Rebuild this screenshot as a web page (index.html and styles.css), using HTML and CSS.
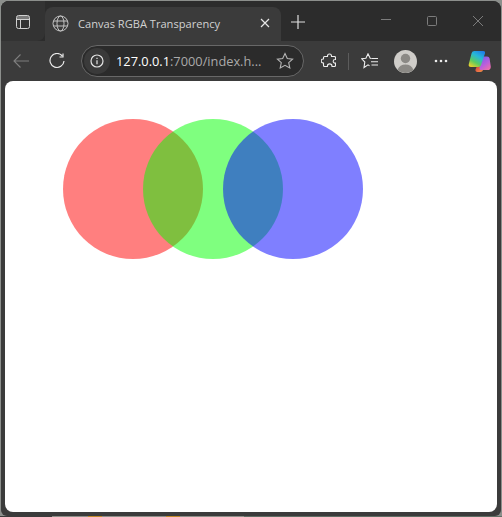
FILE: index.html
```html
<!DOCTYPE html>
<html lang="en">
<head>
    <meta charset="UTF-8">
    <title>Canvas RGBA Transparency</title>
    <link rel="stylesheet" href="styles.css">
</head>
<body>

<div class="window">
    <div class="tab-strip">
        <div class="tab-menu">
            <svg class="icon" width="16" height="16" viewBox="0 0 16 16">
                <path d="M2 2h12v3.500H2z" fill="#d0d0d0" opacity="0.45"/>
                <rect x="1.500" y="1.500" width="13" height="13" rx="2" fill="none" stroke="#d0d0d0"/>
                <path d="M1.500 5.500h13M5.500 5.500v9" fill="none" stroke="#d0d0d0"/>
            </svg>
        </div>
        <div class="tab">
            <svg class="icon" width="17" height="17" viewBox="0 0 17 17" fill="none" stroke="#c4c4c4">
                <circle cx="8.500" cy="8.500" r="7.500"/>
                <ellipse cx="8.500" cy="8.500" rx="3.500" ry="7.500"/>
                <path d="M1.500 6h14M1.500 11h14"/>
            </svg>
            <span class="tab-title">Canvas RGBA Transparency</span>
            <svg class="icon tab-close" width="10" height="10" viewBox="0 0 10 10" stroke="#e6e6e6" stroke-width="1.200">
                <path d="M1 1l8 8M9 1l-8 8"/>
            </svg>
        </div>
        <svg class="icon new-tab" width="16" height="16" viewBox="0 0 16 16" stroke="#e0e0e0" stroke-width="1.200">
            <path d="M8 1v14M1 8h14"/>
        </svg>
        <div class="window-controls">
            <svg class="icon" width="12" height="12" viewBox="0 0 12 12" stroke="#7c7c7c"><path d="M1 4.500h10"/></svg>
            <svg class="icon" width="12" height="12" viewBox="0 0 12 12" fill="none" stroke="#7c7c7c"><rect x="1.500" y="1.500" width="9" height="9" rx="1"/></svg>
            <svg class="icon" width="12" height="12" viewBox="0 0 12 12" stroke="#7c7c7c"><path d="M1 1l10 10M11 1L1 11"/></svg>
        </div>
    </div>

    <div class="toolbar">
        <svg class="icon back" width="16" height="16" viewBox="0 0 16 16" fill="none" stroke="#7e7e7e" stroke-width="1.100">
            <path d="M16 8H1M7.500 1.500L1 8l6.500 6.500"/>
        </svg>
        <svg class="icon reload" width="16" height="16" viewBox="0 0 16 16" fill="none" stroke="#ececec" stroke-width="1.200">
            <path d="M13.400 3A7 7 0 1 0 15 8"/>
            <path d="M14 .5V4h-3.500"/>
        </svg>
        <div class="address">
            <div class="site-info">
                <svg class="icon" width="14" height="14" viewBox="0 0 14 14" fill="none" stroke="#e4e4e4" stroke-width="1.200">
                    <circle cx="7" cy="7" r="6"/>
                    <path d="M7 6.200v4M7 3.800v1.200"/>
                </svg>
            </div>
            <span class="url"><span class="host">127.0.0.1</span>:7000/index.h...</span>
            <svg class="icon" width="18" height="18" viewBox="0 0 18 18" fill="none" stroke="#b5b5b5" stroke-width="1.100">
                <path d="M9 1.500l2.300 5 5.300.6-3.900 3.600 1.100 5.300L9 13.300 4.200 16l1.100-5.300L1.400 7.100l5.300-.6z"/>
            </svg>
        </div>
        <svg class="icon puzzle" width="15" height="16" viewBox="-0.5 0 15 16" fill="none" stroke="#ececec" stroke-width="1.100">
            <path d="M6 3.500V3a2 2 0 0 1 4 0v.500h3a1 1 0 0 1 1 1v2h-.5a1.800 1.800 0 0 0 0 3.600h.5v2.400a1 1 0 0 1-1 1h-2.500v-.3a2.300 2.300 0 0 0-4.600 0v.3H3a1 1 0 0 1-1-1V10h-.3a2 2 0 0 1 0-4H2V4.500a1 1 0 0 1 1-1z"/>
        </svg>
        <div class="divider"></div>
        <svg class="icon fav" width="17" height="16" viewBox="0 0 17 16" fill="none" stroke="#ececec" stroke-width="1.100">
            <path d="M10.500 5.500L9.200 5.200 7 .8 4.900 5.200.7 5.800l3.100 3.200-.8 5.500 4-2.700 1.500.9"/>
            <path d="M10.500 5.500H17M10 8.800h7M10.500 12H17"/>
        </svg>
        <svg class="icon avatar" width="23" height="23" viewBox="0 0 23 23">
            <circle cx="11.500" cy="11.500" r="11.500" fill="#cfcdc9"/>
            <circle cx="11.500" cy="8.500" r="4.700" fill="#8b8985"/>
            <path d="M3.600 19.800c1.200-3.600 4.300-5.300 7.900-5.300s6.700 1.700 7.900 5.300a11.500 11.500 0 0 1-15.800 0z" fill="#8b8985"/>
        </svg>
        <svg class="icon more" width="14" height="4" viewBox="0 0 14 4" fill="#ececec">
            <circle cx="2" cy="2" r="1.300"/><circle cx="7" cy="2" r="1.300"/><circle cx="12" cy="2" r="1.300"/>
        </svg>
        <svg class="icon copilot" width="23" height="23" viewBox="0 0 23 23">
            <defs>
                <linearGradient id="cp-left" x1="0.800" y1="0" x2="0.200" y2="1">
                    <stop offset="0" stop-color="#1f7fe8"/>
                    <stop offset="0.35" stop-color="#27b8d8"/>
                    <stop offset="0.7" stop-color="#5ccb5f"/>
                    <stop offset="1" stop-color="#e8d02e"/>
                </linearGradient>
                <linearGradient id="cp-right" x1="0.200" y1="0" x2="0.800" y2="1">
                    <stop offset="0" stop-color="#7a5fe8"/>
                    <stop offset="0.55" stop-color="#b95fdc"/>
                    <stop offset="1" stop-color="#f06fa8"/>
                </linearGradient>
                <linearGradient id="cp-low" x1="0" y1="0" x2="1" y2="1">
                    <stop offset="0" stop-color="#d8383c"/>
                    <stop offset="1" stop-color="#f59a4a"/>
                </linearGradient>
            </defs>
            <path d="M9 16h7l-1 4c-.4 1.300-1.200 2-2.600 2H9.500c-1.600 0-2.300-1-2-2.500z" fill="url(#cp-low)"/>
            <path d="M12.500 6.500h6.500c1.500 0 2.200.7 2.600 2l1.100 7.500c.4 2.400-.8 4-3 4h-6.200c-1.700 0-2.300-1.200-1.800-3z" fill="url(#cp-right)"/>
            <path d="M6.500 1H15c2 0 2.500 1.200 1.800 3L13 15c-.5 1.300-1.300 2-2.800 2H3c-2 0-2.700-1.200-2.200-3L3.500 3.500C4 1.800 5 1 6.500 1z" fill="url(#cp-left)"/>
        </svg>
    </div>

    <div class="page">
        <svg class="canvas" width="300" height="140" viewBox="0 0 300 140">
            <circle cx="70" cy="70" r="70" fill="rgba(255, 0, 0, 0.5)"/>
            <circle cx="150" cy="70" r="70" fill="rgba(0, 255, 0, 0.5)"/>
            <circle cx="230" cy="70" r="70" fill="rgba(0, 0, 255, 0.5)"/>
        </svg>
    </div>
</div>

<div class="desktop-strip">
    <span class="strip-dark"></span>
    <span class="strip-grey"></span>
    <span class="strip-orange"></span>
    <span class="strip-grey-wide"></span>
    <span class="strip-orange"></span>
    <span class="strip-grey-wide"></span>
    <span class="strip-green"></span>
</div>

</body>
</html>
```

FILE: styles.css
```css
html, body {
    height: 100%;
}
body {
    margin: 0;
    padding: 1px 0 0;
    box-sizing: border-box;
    overflow: hidden;
    background-color: #8c8f8c;
    font-family: 'Open Sans', sans-serif;
}
.icon {
    display: block;
    flex: none;
}
.window {
    height: 515px;
    margin: 0 1px;
    box-sizing: border-box;
    display: flex;
    flex-direction: column;
    background-color: #3b3b3b;
    border-radius: 8px 8px 6px 6px;
    overflow: hidden;
}
.tab-strip {
    height: 40px;
    flex: none;
    display: flex;
    align-items: flex-end;
    background-color: #2c2c2c;
}
.tab-menu {
    width: 44px;
    height: 40px;
    display: flex;
    align-items: center;
    justify-content: center;
    padding: 2px 0 0 0;
    box-sizing: border-box;
    background-color: #333;
    border-radius: 0 0 8px 0;
}
.tab {
    width: 236px;
    height: 34px;
    box-sizing: border-box;
    display: flex;
    align-items: center;
    padding: 0 11px 2px 7px;
    background-color: #3b3b3b;
    border-radius: 8px 8px 0 0;
}
.tab-title {
    flex: 1;
    margin-left: 9px;
    color: #d2d2d2;
    font-size: 11.1px;
    white-space: nowrap;
}
.new-tab {
    margin: 0 0 11px 9px;
}
.window-controls {
    flex: 1;
    display: flex;
    justify-content: space-between;
    padding: 0 17px 0 74px;
    margin-bottom: 14px;
}
.toolbar {
    height: 40px;
    flex: none;
    display: flex;
    align-items: center;
    background-color: #3b3b3b;
}
.back {
    margin-left: 12px;
}
.reload {
    margin-left: 20px;
}
.address {
    width: 223px;
    height: 32px;
    box-sizing: border-box;
    margin-left: 16px;
    padding: 0 9px 0 2px;
    display: flex;
    align-items: center;
    background-color: #2b2b2b;
    border: 1px solid #686868;
    border-radius: 16px;
}
.site-info {
    width: 26px;
    height: 26px;
    display: flex;
    align-items: center;
    justify-content: center;
    background-color: #3a3a3a;
    border-radius: 50%;
}
.url {
    flex: 1;
    margin-left: 6px;
    color: #aaa;
    font-size: 12.8px;
    white-space: nowrap;
}
.host {
    color: #fff;
    font-weight: 500;
}
.puzzle {
    margin-left: 17px;
}
.divider {
    width: 1px;
    height: 17px;
    margin-left: 12px;
    background-color: #5c5c5c;
}
.fav {
    margin-left: 12px;
}
.avatar {
    margin-left: 16px;
}
.more {
    margin-left: 17px;
}
.copilot {
    margin-left: 20px;
}
.page {
    flex: 1;
    margin: 0 4px 4px;
    background-color: #fff;
    border-radius: 8px;
}
.canvas {
    display: block;
    margin: 38px 0 0 58px;
}
.desktop-strip {
    height: 1px;
    display: flex;
}
.strip-dark {
    width: 52px;
    background-color: #3b3b3b;
}
.strip-grey {
    width: 36px;
    background-color: #8d8f88;
}
.strip-orange {
    width: 14px;
    background-color: #c08a2a;
}
.strip-grey-wide {
    width: 64px;
    background-color: #8d8f88;
}
.strip-green {
    flex: 1;
    background-color: #5f6e64;
}
```
